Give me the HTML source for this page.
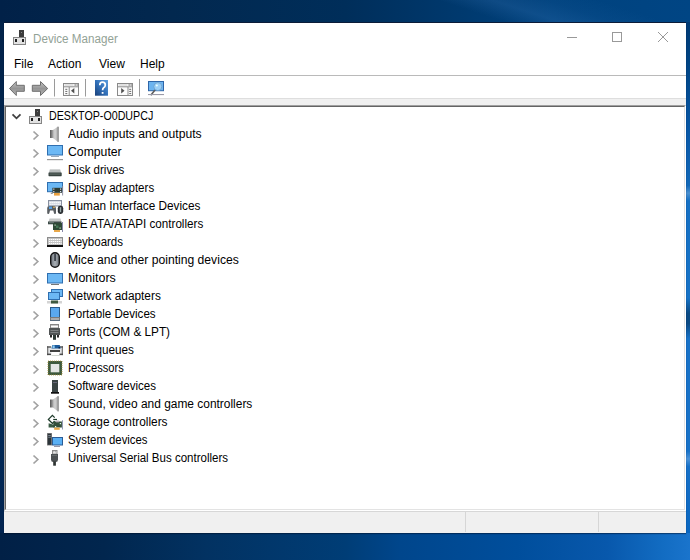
<!DOCTYPE html>
<html><head><meta charset="utf-8">
<style>
*{margin:0;padding:0;box-sizing:border-box}
html,body{width:690px;height:560px;overflow:hidden}
body{position:relative;font-family:"Liberation Sans",sans-serif;font-size:12px;color:#000;
background:#083468}
#bg{position:absolute;left:0;top:0;width:690px;height:560px;background:#003060}
#bgt{position:absolute;left:0;top:0;width:690px;height:23px;background:linear-gradient(90deg,#012148 0%,#02284f 25%,#002e5a 50%,#00386c 65%,#00427e 80%,#004584 100%)}
#bgstreak{position:absolute;left:400px;top:0;width:290px;height:23px;background:linear-gradient(18deg,rgba(90,150,220,0) 30%,rgba(90,150,220,0.16) 45%,rgba(90,150,220,0.05) 60%,rgba(90,150,220,0) 75%)}
#bgb{position:absolute;left:0;top:532px;width:690px;height:28px;background:linear-gradient(90deg,#012046 0%,#01264e 15%,#023262 30%,#003d76 50%,#00468c 58%,#004e9c 75%,#0858ac 88%,#126cc2 96%,#1a74cc 100%)}
#bgl{position:absolute;left:0;top:22px;width:4px;height:511px;background:linear-gradient(180deg,#02234a 0%,#022650 40%,#04315f 65%,#032a58 80%,#022450 100%)}
#bgr{position:absolute;left:686px;top:22px;width:4px;height:511px;background:linear-gradient(180deg,#003a74 0%,#004484 8%,#0858a8 22%,#1268b8 32%,#4a90d0 33.5%,#1570c4 35%,#1672c6 54%,#0a4a84 57%,#0a4a84 59%,#1872c8 62%,#1872c8 84%,#4a92d8 85.5%,#1670c8 87%,#0a66c0 100%)}
.abs{position:absolute}
#win{position:absolute;left:4px;top:23px;width:682px;height:510px;background:#fff;box-shadow:0 -1px 0 #0c1c38, 0 1px 1px rgba(0,10,30,0.45)}
#title{position:absolute;left:33px;top:31.5px;color:#92a296;font-size:12px;transform:scaleX(0.97);transform-origin:0 0;white-space:nowrap;line-height:15px}
.menu{position:absolute;top:57px;font-size:12px;white-space:nowrap;line-height:14px}
.lbl{position:absolute;white-space:nowrap;line-height:14px;transform-origin:0 0}
svg{position:absolute;left:0;top:0}
</style></head><body>
<div id="bg"></div><div id="bgt"></div><div id="bgstreak"></div><div id="bgb"></div><div id="bgl"></div><div id="bgr"></div>
<div id="win"></div>
<div class="abs" style="left:4px;top:75px;width:682px;height:1px;background:#bababa"></div>
<div class="abs" style="left:4px;top:98px;width:682px;height:7px;background:#f0f0f0;border-top:1px solid #dedede"></div>
<div class="abs" style="left:4px;top:105px;width:682px;height:406px;background:#fff;border-top:1px solid #a0a0a0;border-left:1px solid #a0a0a0;border-right:1px solid #fff;border-bottom:1px solid #fff"></div>
<div class="abs" style="left:5px;top:106px;width:680px;height:404px;border-top:1px solid #646464;border-left:1px solid #646464;border-right:1px solid #e3e3e3;border-bottom:1px solid #e3e3e3"></div>
<div class="abs" style="left:4px;top:511px;width:682px;height:22px;background:#f0f0f0;border-top:1px solid #d7d7d7"></div>
<div class="abs" style="left:465px;top:512px;width:1px;height:20px;background:#d6d6d6"></div>
<div class="abs" style="left:598px;top:512px;width:1px;height:20px;background:#d6d6d6"></div>
<div id="title">Device Manager</div>
<div class="menu" style="left:14px">File</div>
<div class="menu" style="left:48px">Action</div>
<div class="menu" style="left:99px">View</div>
<div class="menu" style="left:140px">Help</div>
<div class="lbl" style="left:49px;top:108.8px;transform:scaleX(0.89)">DESKTOP-O0DUPCJ</div>
<div class="lbl" style="left:68px;top:126.8px;transform:scaleX(1.012)">Audio inputs and outputs</div>
<div class="lbl" style="left:68px;top:144.8px;transform:scaleX(1.019)">Computer</div>
<div class="lbl" style="left:68px;top:162.8px;transform:scaleX(0.96)">Disk drives</div>
<div class="lbl" style="left:68px;top:180.8px;transform:scaleX(0.964)">Display adapters</div>
<div class="lbl" style="left:68px;top:198.8px;transform:scaleX(0.983)">Human Interface Devices</div>
<div class="lbl" style="left:68px;top:216.8px;transform:scaleX(0.972)">IDE ATA/ATAPI controllers</div>
<div class="lbl" style="left:68px;top:234.8px;transform:scaleX(0.959)">Keyboards</div>
<div class="lbl" style="left:68px;top:252.8px;transform:scaleX(1.012)">Mice and other pointing devices</div>
<div class="lbl" style="left:68px;top:270.8px;transform:scaleX(1.04)">Monitors</div>
<div class="lbl" style="left:68px;top:288.8px;transform:scaleX(0.987)">Network adapters</div>
<div class="lbl" style="left:68px;top:306.8px;transform:scaleX(0.966)">Portable Devices</div>
<div class="lbl" style="left:68px;top:324.8px;transform:scaleX(0.981)">Ports (COM &amp; LPT)</div>
<div class="lbl" style="left:68px;top:342.8px;transform:scaleX(0.979)">Print queues</div>
<div class="lbl" style="left:68px;top:360.8px;transform:scaleX(0.93)">Processors</div>
<div class="lbl" style="left:68px;top:378.8px;transform:scaleX(0.963)">Software devices</div>
<div class="lbl" style="left:68px;top:396.8px;transform:scaleX(0.994)">Sound, video and game controllers</div>
<div class="lbl" style="left:68px;top:414.8px;transform:scaleX(0.988)">Storage controllers</div>
<div class="lbl" style="left:68px;top:432.8px;transform:scaleX(0.946)">System devices</div>
<div class="lbl" style="left:68px;top:450.8px;transform:scaleX(0.96)">Universal Serial Bus controllers</div>
<svg width="690" height="560" viewBox="0 0 690 560">
<defs>
<linearGradient id="spk" x1="0" y1="0" x2="1" y2="0"><stop offset="0" stop-color="#b4b4b4"/><stop offset="0.4" stop-color="#d4d4d4"/><stop offset="1" stop-color="#a8a8a8"/></linearGradient><linearGradient id="spkr" x1="0" y1="0" x2="1" y2="0"><stop offset="0" stop-color="#555"/><stop offset="1" stop-color="#a8a8a8"/></linearGradient>
</defs>
<path d="M567 37.5 H577" stroke="#999" stroke-width="1"/>
<rect x="612.5" y="32.5" width="9" height="9" fill="none" stroke="#999" stroke-width="1"/>
<path d="M658 32 L668 42 M668 32 L658 42" stroke="#999" stroke-width="1"/>

<defs>
<linearGradient id="arr" x1="0" y1="0" x2="0" y2="1"><stop offset="0" stop-color="#c4c4c4"/><stop offset="0.5" stop-color="#959595"/><stop offset="1" stop-color="#b4b4b4"/></linearGradient>
<linearGradient id="hlp" x1="1" y1="0" x2="0" y2="1"><stop offset="0" stop-color="#5a9ee0"/><stop offset="0.55" stop-color="#2f6cb4"/><stop offset="1" stop-color="#183f78"/></linearGradient>
<linearGradient id="mse" x1="0" y1="0" x2="1" y2="0"><stop offset="0" stop-color="#6a7078"/><stop offset="0.5" stop-color="#a8aeb4"/><stop offset="1" stop-color="#70767c"/></linearGradient>
</defs>
<path d="M9.5 88.5 L16.3 81.5 V85.3 H24.3 V91.3 H16.3 V95.5 Z" fill="url(#arr)" stroke="#6e6e6e" stroke-linejoin="round"/>
<path d="M47.7 88.5 L40.5 81.5 V85.3 H32.3 V91.3 H40.5 V95.5 Z" fill="url(#arr)" stroke="#6e6e6e" stroke-linejoin="round"/>
<rect x="54" y="79" width="1" height="17.5" fill="#9a9a9a"/>
<rect x="85" y="79" width="1" height="17.5" fill="#9a9a9a"/>
<rect x="139" y="79" width="1" height="17.5" fill="#9a9a9a"/>
<rect x="63.5" y="83.5" width="15" height="12" fill="#fcfcfc" stroke="#8a8a8a"/>
<rect x="64" y="86.3" width="14" height="1" fill="#8a8a8a"/>
<rect x="64.5" y="84.5" width="9" height="1" fill="#c8c8c8"/>
<rect x="74.5" y="84.3" width="1.3" height="1.4" fill="#777"/><rect x="76.5" y="84.3" width="1.3" height="1.4" fill="#777"/>
<rect x="68.7" y="87" width="1" height="8.5" fill="#8a8a8a"/>
<rect x="65.3" y="88.8" width="2" height="1.1" fill="#777"/><rect x="65.3" y="90.9" width="2" height="1.1" fill="#777"/><rect x="65.3" y="93" width="2" height="1.1" fill="#777"/>
<path d="M74.3 88 V93.6 L71 90.8 Z" fill="#505050"/>
<rect x="95" y="80" width="13" height="15.7" fill="url(#hlp)"/>
<path d="M99.8 85.3 Q99.8 82.2 102.5 82.2 Q105.3 82.2 105.3 85 Q105.3 86.8 103.6 87.8 Q102.6 88.5 102.6 90.3" fill="none" stroke="#fff" stroke-width="1.7"/>
<rect x="101.7" y="92" width="1.8" height="1.8" fill="#fff"/>
<rect x="117.5" y="83.5" width="15" height="12" fill="#fcfcfc" stroke="#8a8a8a"/>
<rect x="118" y="86.3" width="14" height="1" fill="#8a8a8a"/>
<rect x="118.5" y="84.5" width="9" height="1" fill="#c8c8c8"/>
<rect x="128.5" y="84.3" width="1.3" height="1.4" fill="#777"/><rect x="130.5" y="84.3" width="1.3" height="1.4" fill="#777"/>
<rect x="127.5" y="87" width="1" height="8.5" fill="#8a8a8a"/>
<rect x="129.2" y="88.8" width="2" height="1.1" fill="#777"/><rect x="129.2" y="90.9" width="2" height="1.1" fill="#777"/><rect x="129.2" y="93" width="2" height="1.1" fill="#777"/>
<path d="M121.2 88 V93.6 L124.5 90.8 Z" fill="#505050"/>
<rect x="148.5" y="81.5" width="15" height="9.2" fill="#6cb4f0" stroke="#2f66a8"/>
<circle cx="157.8" cy="86.6" r="4" fill="#9ccff6" stroke="#6a9fcc" stroke-width="0.8"/>
<circle cx="156.8" cy="85.5" r="1.1" fill="#e8ffff"/>
<path d="M155 90 L150.8 95.3" fill="none" stroke="#5e5e5e" stroke-width="1.6"/>
<rect x="148" y="94" width="16" height="1.1" fill="#9a9aa8"/>

<path d="M33.5 131.5 L37.8 135.5 L33.5 139.5" fill="none" stroke="#a2a2a2" stroke-width="1.7"/>
<path d="M33.5 149.5 L37.8 153.5 L33.5 157.5" fill="none" stroke="#a2a2a2" stroke-width="1.7"/>
<path d="M33.5 167.5 L37.8 171.5 L33.5 175.5" fill="none" stroke="#a2a2a2" stroke-width="1.7"/>
<path d="M33.5 185.5 L37.8 189.5 L33.5 193.5" fill="none" stroke="#a2a2a2" stroke-width="1.7"/>
<path d="M33.5 203.5 L37.8 207.5 L33.5 211.5" fill="none" stroke="#a2a2a2" stroke-width="1.7"/>
<path d="M33.5 221.5 L37.8 225.5 L33.5 229.5" fill="none" stroke="#a2a2a2" stroke-width="1.7"/>
<path d="M33.5 239.5 L37.8 243.5 L33.5 247.5" fill="none" stroke="#a2a2a2" stroke-width="1.7"/>
<path d="M33.5 257.5 L37.8 261.5 L33.5 265.5" fill="none" stroke="#a2a2a2" stroke-width="1.7"/>
<path d="M33.5 275.5 L37.8 279.5 L33.5 283.5" fill="none" stroke="#a2a2a2" stroke-width="1.7"/>
<path d="M33.5 293.5 L37.8 297.5 L33.5 301.5" fill="none" stroke="#a2a2a2" stroke-width="1.7"/>
<path d="M33.5 311.5 L37.8 315.5 L33.5 319.5" fill="none" stroke="#a2a2a2" stroke-width="1.7"/>
<path d="M33.5 329.5 L37.8 333.5 L33.5 337.5" fill="none" stroke="#a2a2a2" stroke-width="1.7"/>
<path d="M33.5 347.5 L37.8 351.5 L33.5 355.5" fill="none" stroke="#a2a2a2" stroke-width="1.7"/>
<path d="M33.5 365.5 L37.8 369.5 L33.5 373.5" fill="none" stroke="#a2a2a2" stroke-width="1.7"/>
<path d="M33.5 383.5 L37.8 387.5 L33.5 391.5" fill="none" stroke="#a2a2a2" stroke-width="1.7"/>
<path d="M33.5 401.5 L37.8 405.5 L33.5 409.5" fill="none" stroke="#a2a2a2" stroke-width="1.7"/>
<path d="M33.5 419.5 L37.8 423.5 L33.5 427.5" fill="none" stroke="#a2a2a2" stroke-width="1.7"/>
<path d="M33.5 437.5 L37.8 441.5 L33.5 445.5" fill="none" stroke="#a2a2a2" stroke-width="1.7"/>
<path d="M33.5 455.5 L37.8 459.5 L33.5 463.5" fill="none" stroke="#a2a2a2" stroke-width="1.7"/>
<path d="M12.5 114.3 L16.5 118.3 L20.5 114.3" fill="none" stroke="#404040" stroke-width="1.8"/>
<rect x="19" y="30" width="5" height="7" fill="#3c3c3c"/>
<rect x="21" y="32" width="1" height="1" fill="#888"/>
<rect x="13.5" y="37.5" width="12" height="7" fill="#e2e2e2" stroke="#858585"/>
<rect x="15" y="39" width="2" height="3" fill="#1e1e1e"/>
<rect x="22" y="39" width="2" height="3" fill="#1e1e1e"/>
<rect x="35" y="109" width="5" height="7" fill="#3c3c3c"/>
<rect x="37" y="111" width="1" height="1" fill="#888"/>
<rect x="29.5" y="116.5" width="12" height="7" fill="#e2e2e2" stroke="#858585"/>
<rect x="31" y="118" width="2" height="3" fill="#1e1e1e"/>
<rect x="38" y="118" width="2" height="3" fill="#1e1e1e"/>
<rect x="50" y="130.0" width="3" height="8" fill="url(#spkr)"/>
<path d="M53 130.0 L58 126.5 V142.0 L53 138.0 Z" fill="url(#spk)"/>
<rect x="57.6" y="126.7" width="1.2" height="15.2" fill="#8c8c8c"/>
<rect x="50" y="399.5" width="3" height="8" fill="url(#spkr)"/>
<path d="M53 399.5 L58 396 V411.5 L53 407.5 Z" fill="url(#spk)"/>
<rect x="57.6" y="396.2" width="1.2" height="15.2" fill="#8c8c8c"/>
<rect x="47.5" y="145.5" width="15" height="9.5" fill="#6cb8f4" stroke="#2f6fb0"/>
<rect x="51" y="156" width="8" height="1" fill="#9ab"/>
<rect x="47" y="159" width="16" height="1.2" fill="#999"/>
<path d="M48.8 173 L50 169 H60 L61.2 173 Z" fill="#b9bdbd"/>
<rect x="50" y="169" width="10" height="1" fill="#d4d6d6"/>
<rect x="48.5" y="172.5" width="13.2" height="3.7" rx="0.6" fill="#36423e"/>
<rect x="49.5" y="173.6" width="11" height="0.9" fill="#6a7672"/>
<rect x="47.5" y="182.5" width="15" height="9.2" fill="#6cb8f4" stroke="#2f6fb0"/>
<rect x="52.4" y="187.8" width="9.6" height="5" fill="#2e3c34"/>
<rect x="53.2" y="188.5" width="1.2" height="1.2" fill="#dde"/><rect x="60" y="188.5" width="1.2" height="1.2" fill="#dde"/>
<rect x="53.2" y="191" width="1.2" height="1.2" fill="#dde"/><rect x="60" y="191" width="1.2" height="1.2" fill="#dde"/>
<rect x="50.8" y="192.8" width="2" height="0.8" fill="#555"/>
<rect x="54" y="193" width="5.8" height="2.6" fill="#e8a040"/>
<rect x="62.2" y="186" width="0.9" height="9.5" fill="#889"/>
<rect x="48.5" y="200.5" width="13" height="5.5" fill="#d4d8e0" stroke="#8890a0"/>
<path d="M49.5 202.5 H61 M49.5 204.3 H61" stroke="#fff" stroke-width="1" stroke-dasharray="1.3 0.7"/>
<path d="M47.2 208 Q47.2 206 49.5 206 H54 Q56 206 56 208.5 V213 Q56 214 55 214 Q54 214 53.8 212.5 L53.3 210.5 H50 L49.5 212.5 Q49.2 214 48.2 214 Q47.2 214 47.2 213 Z" fill="#5a5e62"/>
<rect x="49" y="206.5" width="3" height="2.5" fill="#5aa0e0"/>
<rect x="53" y="206.5" width="2" height="1.5" fill="#c0a060"/>
<rect x="57.8" y="205.8" width="5.4" height="8.2" rx="2.4" fill="#2a2e32"/>
<rect x="59.8" y="207.2" width="1.4" height="5" fill="#9aa"/>
<path d="M48.5 222 L49.5 218.5 H60.5 L61.5 222 Z" fill="#c4c6c6"/>
<rect x="48" y="221.5" width="13.5" height="2.8" fill="#3c4a46"/>
<rect x="49" y="222.3" width="5" height="0.8" fill="#7a8884"/>
<rect x="53" y="223" width="9" height="7" fill="#2e4a36"/>
<rect x="54.5" y="224.5" width="1.2" height="1.2" fill="#cdc"/><rect x="59.5" y="227.5" width="1.2" height="1.2" fill="#cdc"/>
<rect x="56" y="225.5" width="2.5" height="2.5" fill="#475"/>
<rect x="54" y="230" width="6" height="2" fill="#e8a84a"/>
<rect x="62" y="222" width="1" height="10" fill="#88a"/>
<rect x="47.5" y="237.5" width="15" height="8.5" fill="#c4c4c4" stroke="#8c8c8c"/>
<path d="M49 239.5 H61.5 M49 241.5 H61.5 M49 243.5 H61.5" stroke="#fff" stroke-width="1.1" stroke-dasharray="1.4 0.6"/>
<rect x="47" y="245" width="16" height="2" fill="#111"/>
<rect x="50.7" y="252.7" width="8.6" height="14.6" rx="4.3" fill="url(#mse)" stroke="#151515" stroke-width="1.4"/>
<rect x="54.3" y="253.5" width="1.5" height="7.5" fill="#2a3038"/>
<rect x="47.5" y="273.5" width="15" height="9.5" fill="#6cb8f4" stroke="#2f6fb0"/>
<rect x="51" y="284" width="8" height="1" fill="#777"/>
<rect x="51.5" y="289.5" width="11" height="7" fill="#6cb8f4" stroke="#2f6fb0"/>
<rect x="48.5" y="292.5" width="11" height="7" fill="#6cb8f4" stroke="#2f6fb0"/>
<rect x="47" y="301" width="15" height="2.5" fill="#d4d4d4"/>
<rect x="51" y="300.5" width="7" height="3" fill="#3e5a40"/>
<rect x="50.5" y="307.5" width="9" height="13" fill="#5aa8ee" stroke="#2a5a8a"/>
<rect x="50" y="317" width="10" height="3.6" fill="#7a7a7a"/>
<rect x="51" y="318.5" width="8" height="1" fill="#ddd"/>
<rect x="50.5" y="324.5" width="8" height="3.5" fill="#fff" stroke="#8a8a8a"/>
<path d="M52 324.5 v1.3 M54 324.5 v1.3 M56 324.5 v1.3 M58 324.5 v1.3" stroke="#777" stroke-width="1"/>
<rect x="49" y="328" width="11" height="7" rx="0.6" fill="#505455"/>
<rect x="50.5" y="330" width="8" height="0.8" fill="#8a8e90"/><rect x="50.5" y="332" width="8" height="0.8" fill="#8a8e90"/>
<rect x="50" y="335" width="2" height="2.5" fill="#2a2a2a"/><rect x="57" y="335" width="2" height="2.5" fill="#2a2a2a"/>
<rect x="53" y="335" width="3" height="4.8" fill="#2e3a36"/>
<rect x="47" y="346.3" width="16" height="8.8" fill="#e2e4e6"/>
<rect x="47" y="346.3" width="1.3" height="8.8" fill="#7a7a7a"/><rect x="61.7" y="346.3" width="1.3" height="8.8" fill="#7a7a7a"/>
<rect x="47" y="346.3" width="4" height="1.4" fill="#555"/><rect x="59" y="346.3" width="4" height="1.4" fill="#555"/>
<rect x="47" y="353.6" width="4" height="1.5" fill="#4a4a4a"/><rect x="59" y="353.6" width="4" height="1.5" fill="#4a4a4a"/>
<path d="M51.5 348.6 L52.3 345 H59.7 L60.8 348.6 Z" fill="#1c5a9a"/>
<rect x="52.5" y="345.4" width="2.2" height="2.6" fill="#8ccaf2"/>
<rect x="58.5" y="347" width="1.5" height="1.4" fill="#0a2040"/>
<rect x="50" y="350.2" width="10" height="1.6" fill="#1a1a1a"/>
<rect x="51.5" y="352" width="8" height="3.3" fill="#fff"/>
<rect x="51.5" y="355" width="8" height="0.6" fill="#b8c0b8"/>
<rect x="48" y="361" width="14" height="14" fill="#3e5a3e" stroke="#a8903a" stroke-width="0.8" stroke-dasharray="1 1"/>
<rect x="50.7" y="364" width="8.6" height="8.3" fill="#e4e6e4"/>
<rect x="52" y="380" width="6" height="12" fill="#3a4444"/>
<rect x="53" y="382" width="4" height="1" fill="#667"/>
<rect x="51" y="392" width="8" height="1.7" fill="#111"/>
<path d="M54.7 417.6 L52.4 415.4 L48.4 419.4 L52.4 423.4 L54.7 421.2" fill="none" stroke="#1e3a2a" stroke-width="1.3"/>
<path d="M53.2 419.5 H57" stroke="#1e3a2a" stroke-width="1.2"/>
<path d="M48.6 423.2 L54.5 425 V427.5 H48.6 Z" fill="#3a5a44"/>
<rect x="53.3" y="421.5" width="8.6" height="6" fill="#34503c"/>
<rect x="56" y="420.5" width="3" height="1.8" fill="#b8b0b8"/>
<rect x="55" y="426" width="1.2" height="1.2" fill="#dfe"/><rect x="59.8" y="423" width="1.2" height="1.2" fill="#dfe"/>
<rect x="54.2" y="427.6" width="5.5" height="2.2" fill="#e8a848"/>
<rect x="62" y="420.2" width="0.9" height="9.3" fill="#8890b0"/>
<rect x="47" y="433" width="5" height="12.5" fill="#8a8a8a"/>
<rect x="47.7" y="433.7" width="3.6" height="11.1" fill="#2c3438"/>
<rect x="48.2" y="435" width="2.6" height="0.8" fill="#8894a0"/><rect x="48.2" y="436.8" width="2.6" height="0.8" fill="#8894a0"/>
<rect x="52.5" y="437.5" width="10" height="7.5" fill="#5ab0f4" stroke="#2a5c96"/>
<rect x="54" y="446" width="6" height="1" fill="#99a"/>
<rect x="52.5" y="450.5" width="4.5" height="3.5" fill="#f4f4f4" stroke="#8a8a8a"/>
<rect x="53.4" y="451.3" width="1" height="1" fill="#777"/><rect x="55.2" y="451.3" width="1" height="1" fill="#777"/>
<path d="M51 454 H58 V459.5 Q58 462 55.8 462 H53.2 Q51 462 51 459.5 Z" fill="#4c5052"/>
<rect x="52" y="455" width="5" height="0.8" fill="#6a6e70"/>
<rect x="53.2" y="461.5" width="2.7" height="4.2" fill="#2e3432"/>
</svg>
</body></html>
